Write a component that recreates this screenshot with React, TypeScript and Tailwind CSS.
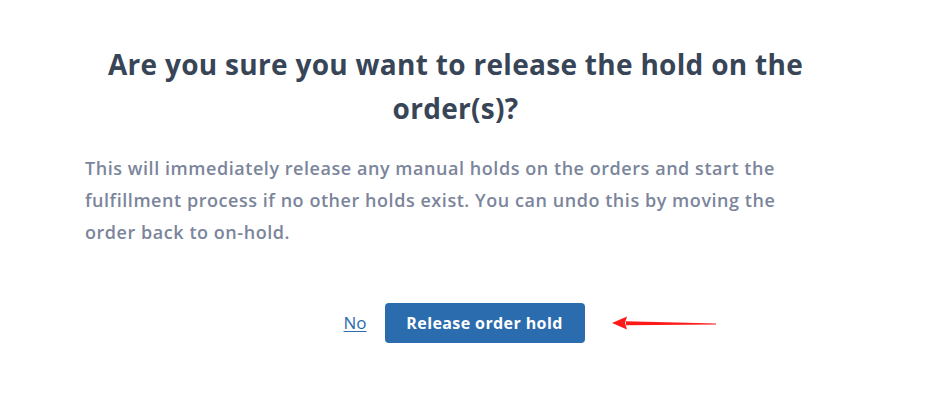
import React from "react";

const FONT = "font-['Open_Sans','Liberation_Sans',sans-serif]";

function RedArrow() {
  // hand-drawn style annotation arrow pointing left at the button
  return (
    <svg width="110" height="16" viewBox="0 0 110 16" className="absolute left-[227px] top-[12px]">
      <path d="M14 6.2 L104 8.6 L104 9.4 L14 10.2 Z" fill="#ff1a1a" />
      <path d="M0 8 L15 1.5 L13 8 L15 14.5 Z" fill="#ff1a1a" />
    </svg>
  );
}

export default function App() {
  return (
    <main className={`w-[931px] h-[411px] bg-white ${FONT} overflow-hidden`}>
      <div className="pl-[85px] pr-[105px] pt-[42px]">
        <h1 className="text-center text-[28px] leading-[44px] font-bold tracking-[0.3px] text-[#384557] px-[12px]">
          Are you sure you want to release the hold on the order(s)?
        </h1>

        <p className="mt-[22px] text-[18px] leading-[32px] font-semibold tracking-[0.55px] text-[#7b859b] max-w-[705px]">
          This will immediately release any manual holds on the orders and start the fulfillment process if no other
          holds exist. You can undo this by moving the order back to on-hold.
        </p>

        <div className="mt-[55px] flex items-center justify-center gap-[18px] pl-[17px]">
          <a href="#" className="text-[17px] text-[#2b6cae] underline underline-offset-2">
            No
          </a>
          <div className="relative">
            <button className="w-[200px] h-[40px] rounded-[4px] bg-[#2b6cae] text-white text-[16px] font-bold tracking-[0.4px]">
              Release order hold
            </button>
            <RedArrow />
          </div>
        </div>
      </div>
    </main>
  );
}
